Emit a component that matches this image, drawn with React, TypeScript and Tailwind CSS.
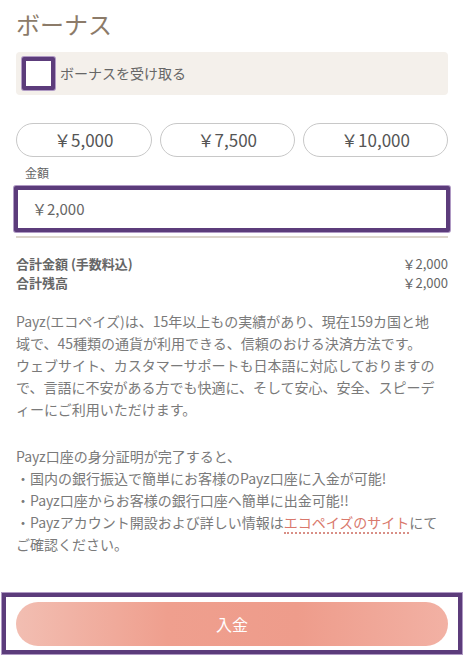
import React from "react";

const font = {
  fontFamily: '"Noto Sans CJK JP", "Noto Sans", sans-serif',
};

export default function App() {
  const amounts = ["￥5,000", "￥7,500", "￥10,000"];
  return (
    <div className="w-[464px] h-[655px] bg-white overflow-hidden" style={font}>
      <div className="px-[16px] pt-[8px]">
        <h1 className="text-[24px] leading-[32px] text-[#8c7b69] font-normal">ボーナス</h1>

        <div className="mt-[12px] h-[43px] rounded-[4px] bg-[#f4f0eb] flex items-center pl-[6px]">
          <div className="w-[33px] h-[33px] border-[4px] border-[#5c3c7b] bg-white rounded-[2px] shadow-[0_0_0_1px_#b09ac4]" />
          <span className="ml-[5px] text-[14px] text-[#666]">ボーナスを受け取る</span>
        </div>

        <div className="mt-[28px] flex gap-[8px]">
          {amounts.map((a) => (
            <button
              key={a}
              className="flex-auto h-[34px] rounded-full border border-[#c8c8c8] bg-white text-[17px] text-[#555] px-[16px]"
            >
              {a}
            </button>
          ))}
        </div>

        <div className="mt-[8px] pl-[9px] text-[12px] leading-[16px] text-[#666]">金額</div>

        <div className="mt-[5px] -mx-[2px] h-[46px] border-[4px] border-[#5c3c7b] shadow-[0_0_0_1px_#b09ac4] bg-white flex items-center pl-[14px] text-[15px] text-[#666] rounded-[2px]">
          ￥2,000
        </div>
        <div className="mt-[4px] h-[2px] bg-[#ddd6cc]" />

        <div className="mt-[16px] text-[13px] leading-[19px] font-bold text-[#666]">
          <div className="flex justify-between">
            <span>合計金額 (手数料込)</span>
            <span className="font-normal">￥2,000</span>
          </div>
          <div className="flex justify-between">
            <span>合計残高</span>
            <span className="font-normal">￥2,000</span>
          </div>
        </div>

        <div className="mt-[18px] text-[14px] leading-[22px] text-[#7a7a7a] whitespace-nowrap">
          <div>Payz(エコペイズ)は、15年以上もの実績があり、現在159カ国と地</div>
          <div>域で、45種類の通貨が利用できる、信頼のおける決済方法です。</div>
          <div>ウェブサイト、カスタマーサポートも日本語に対応しておりますの</div>
          <div>で、言語に不安がある方でも快適に、そして安心、安全、スピーデ</div>
          <div>ィーにご利用いただけます。</div>
        </div>

        <div className="mt-[25px] text-[14px] leading-[22px] text-[#7a7a7a] whitespace-nowrap">
          <div>Payz口座の身分証明が完了すると、</div>
          <div>・国内の銀行振込で簡単にお客様のPayz口座に入金が可能!</div>
          <div>・Payz口座からお客様の銀行口座へ簡単に出金可能!!</div>
          <div>
            ・Payzアカウント開設および詳しい情報は
            <span className="text-[#d9786c] border-b-2 border-dotted border-[#d98f86]">エコペイズのサイト</span>
            にて
          </div>
          <div>ご確認ください。</div>
        </div>
      </div>

      <div className="mt-[38px] mx-[2px] h-[61px] border-[4px] border-[#5c3c7b] shadow-[0_0_0_1px_#b09ac4] flex items-center px-[10px]">
        <button className="w-full h-[44px] rounded-full text-white text-[16px] bg-[linear-gradient(to_right,#f2beb2_0%,#ef9f8e_35%,#ee9c8b_65%,#f2b1a4_100%)]">
          入金
        </button>
      </div>
    </div>
  );
}
